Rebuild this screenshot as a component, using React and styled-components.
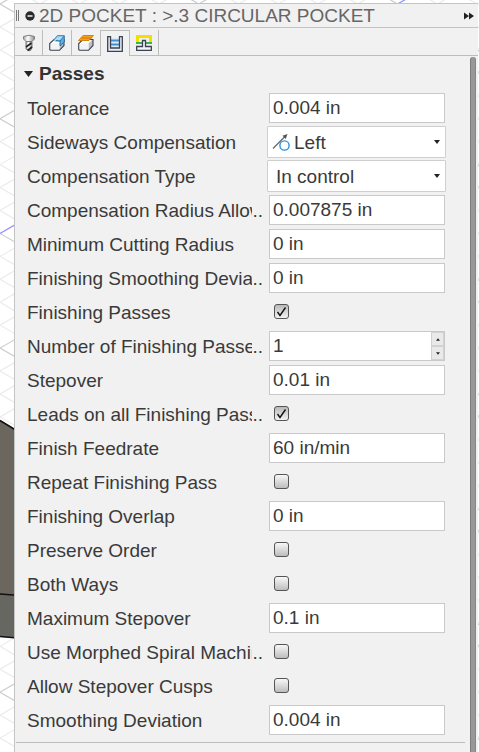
import { useState } from "react";
import styled, { createGlobalStyle } from "styled-components";

const GlobalStyle = createGlobalStyle`
  * {
    box-sizing: border-box;
  }
  body {
    margin: 0;
    background-color: #fff;
    color: #3a3a3a;
    font-family: "Liberation Sans", Arial, sans-serif;
    font-size: 19px;
  }
`;

const Canvas = styled.svg`
  position: fixed;
  inset: 0;
  width: 100%;
  height: 100%;
`;

const Panel = styled.section`
  position: relative;
  display: flex;
  flex-direction: column;
  min-height: calc(100vh - 3px);
  margin: 3px 1px 0 14px;
  border: solid #c4c4c4;
  border-width: 1px 0 0 1px;
  background-color: #f1f1f1;
`;

const TitleBar = styled.header`
  display: flex;
  align-items: center;
  height: 24px;
  padding: 0 4px 0 1px;
  border-bottom: 1px solid #c4c4c4;
`;
const Grip = styled.span`
  width: 3px;
  height: 11px;
  border: solid #777;
  border-width: 0 1px;
`;
const IconButton = styled.button`
  display: flex;
  padding: 0;
  border: none;
  background: none;
  cursor: pointer;
`;
const CollapseButton = styled(IconButton)`
  margin: 0 4px 0 6px;
`;
const Title = styled.h1`
  flex: 1;
  margin: 0;
  color: #666;
  font-size: 19px;
  font-weight: 400;
  line-height: 22px;
  white-space: nowrap;
`;

const Tabs = styled.div`
  display: flex;
  height: 28px;
  padding-top: 2px;
  border-bottom: 1px solid #bdbdbd;
`;
const Tab = styled.button`
  display: flex;
  align-items: center;
  justify-content: center;
  width: 29px;
  height: ${(props) => (props.$active ? "26px" : "25px")};
  padding: 0;
  border: solid #bdbdbd;
  border-width: ${(props) => (props.$active ? "1px 1px 0 0" : "0 1px 0 0")};
  background-color: #f1f1f1;
  cursor: pointer;

  &:first-child {
    width: 28px;
  }
`;

const Body = styled.div`
  display: flex;
  flex: 1;
  padding: 1px 2px 0 0;
`;
const Content = styled.div`
  flex: 1;
  min-width: 0;
`;
const ScrollBar = styled.div`
  width: 6px;
  border-left: 1px solid #7c7c7c;
  border-right: 1px solid #868686;
  border-radius: 3px 3px 0 0;
  background-color: #989898;
`;

const GroupTitle = styled.h2`
  margin: 0;
  font-size: 19px;
`;
const GroupButton = styled.button`
  display: flex;
  align-items: center;
  gap: 6px;
  height: 34px;
  padding: 0 0 0 9px;
  border: none;
  background: none;
  color: #333;
  font: inherit;
  cursor: pointer;
`;

const Row = styled.div`
  display: grid;
  grid-template-columns: 236px minmax(0, 1fr);
  column-gap: 4px;
  align-items: center;
  height: 34px;
  padding: 0 24px 0 12px;
`;
const Label = styled.label`
  display: flex;
  padding-top: 2px;
  line-height: 32px;
  white-space: nowrap;
`;
const LabelText = styled.span`
  overflow: hidden;
`;
const TextBox = styled.div`
  display: flex;
  height: 30px;
  margin: 0 1px 0 2px;
  border: 1px solid #c9c9c9;
  background-color: #fff;
`;
const Input = styled.input`
  flex: 1;
  min-width: 0;
  height: 28px;
  padding: 0 3px;
  border: none;
  outline: none;
  background: none;
  color: inherit;
  font: inherit;
`;
const SelectBox = styled.div`
  display: flex;
  align-items: center;
  height: 32px;
  padding: 0 5px 0 4px;
  border: 1px solid #cfcfcf;
  border-radius: 1px;
  background-color: #fff;
`;
const Select = styled.select`
  flex: 1;
  min-width: 0;
  height: 30px;
  padding: 0 4px;
  border: none;
  outline: none;
  appearance: none;
  background: none;
  color: inherit;
  font: inherit;
`;
const Steps = styled.div`
  display: flex;
  flex-direction: column;
  width: 13px;
`;
const StepButton = styled.button`
  display: flex;
  flex: 1;
  align-items: center;
  justify-content: center;
  padding: 0;
  border: 1px solid #d2d2d2;
  background-color: #e9e9e9;
`;
const CheckBox = styled.span`
  display: grid;
  width: 15px;
  height: 15px;
  margin: 0 0 1px 7px;

  > * {
    grid-area: 1 / 1;
  }
  svg {
    z-index: 1;
    pointer-events: none;
  }
`;
const CheckInput = styled.input`
  width: 15px;
  height: 15px;
  margin: 0;
  border: 1px solid #555;
  border-radius: 3px;
  appearance: none;
  background: linear-gradient(#f8f8f8, #bdbdbd);

  &:checked {
    background: linear-gradient(#b8b8b8, #f4f4f4);
  }
`;
const Hr = styled.hr`
  height: 1px;
  margin: 5px 5px 0 1px;
  border: none;
  background-color: #bdbdbd;
`;

const fields = [
  { id: "tolerance", label: "Tolerance", value: "0.004 in" },
  {
    id: "sideways",
    label: "Sideways Compensation",
    type: "select",
    icon: true,
    options: ["Left", "Right"],
  },
  {
    id: "compType",
    label: "Compensation Type",
    type: "select",
    options: ["In control", "In computer", "Wear", "Inverse wear", "Off"],
  },
  {
    id: "radiusAllowance",
    label: "Compensation Radius Allowance",
    cut: true,
    value: "0.007875 in",
  },
  { id: "minRadius", label: "Minimum Cutting Radius", value: "0 in" },
  {
    id: "finishSmoothing",
    label: "Finishing Smoothing Deviation",
    cut: true,
    value: "0 in",
  },
  {
    id: "finishing",
    label: "Finishing Passes",
    type: "check",
    checked: true,
  },
  {
    id: "passCount",
    label: "Number of Finishing Passes",
    cut: true,
    type: "number",
    value: 1,
  },
  { id: "stepover", label: "Stepover", value: "0.01 in" },
  {
    id: "leads",
    label: "Leads on all Finishing Passes",
    cut: true,
    type: "check",
    checked: true,
  },
  { id: "feedrate", label: "Finish Feedrate", value: "60 in/min" },
  { id: "repeat", label: "Repeat Finishing Pass", type: "check" },
  { id: "overlap", label: "Finishing Overlap", value: "0 in" },
  { id: "order", label: "Preserve Order", type: "check" },
  { id: "bothWays", label: "Both Ways", type: "check" },
  { id: "maxStepover", label: "Maximum Stepover", value: "0.1 in" },
  {
    id: "spiral",
    label: "Use Morphed Spiral Machining",
    cut: true,
    type: "check",
  },
  { id: "cusps", label: "Allow Stepover Cusps", type: "check" },
  { id: "smoothing", label: "Smoothing Deviation", value: "0.004 in" },
];

const ToolIcon = () => (
  <svg width="16" height="18" viewBox="0 0 16 18">
    <defs>
      <linearGradient id="steel">
        <stop offset="0" stopColor="#a5a5a5" />
        <stop offset="0.4" stopColor="#fff" />
        <stop offset="1" stopColor="#8a8a8a" />
      </linearGradient>
    </defs>
    <path
      d="M2.500 2.500 Q8 0 13.500 2.500 V5 L11 7.500 H5 L2.500 5Z"
      fill="url(#steel)"
      stroke="#808080"
    />
    <path d="M5 7.500H11V14L9 17 5 15Z" fill="url(#steel)" stroke="#777" />
    <path d="M5 13 10.500 9M6.500 16.500 11 13" stroke="#222" strokeWidth="1.600" />
  </svg>
);

const Block = () => (
  <>
    <path d="M1 8.500 5.500 4H15L10.500 8.500Z" fill="#fff" />
    <path d="M10.500 8.500 15 4V10.500L10.500 15Z" fill="#b9bdc6" />
    <path d="M1 8.500H10.500V15H1Z" fill="#f2f3f5" />
    <path
      d="M1.500 15.300 .7 14.500V8.500L5 4.500H15V10.500L10.500 15.300H1.500"
      fill="none"
      stroke="#3b4252"
      strokeWidth="1.100"
    />
  </>
);

const GeometryIcon = () => (
  <svg width="16" height="16" viewBox="0 0 16 16">
    <Block />
    <path d="M5.500 4 8.500 .700H15.300V7L11 11V6.500H5.500Z" fill="#5aaee8" />
    <path d="M5.500 4.500 8.500 .700H15.300L11.500 5.500H5.500Z" fill="#a5dcfa" />
    <path
      d="M5.500 4 8.500 .700H15.300V7L11 11V6L7 5.500M11 6 15 1.200"
      fill="none"
      stroke="#1c6193"
      strokeWidth=".8"
    />
  </svg>
);

const HeightsIcon = () => (
  <svg width="16" height="16" viewBox="0 0 16 16">
    <Block />
    <path d="M.500 5.500 5 .500H15.500L11 5.500Z" fill="#f6a01c" stroke="#d4830f" />
    <path d="M3.500 3H13.500" stroke="#c8780d" />
  </svg>
);

const PassesIcon = () => (
  <svg width="16" height="16" viewBox="0 0 16 16">
    <path d="M3 2H13V12H3Z" fill="#d9ecfa" />
    <path d="M3 4.500H13M3 8.500H13" stroke="#4a8ccb" strokeWidth="2" />
    <path
      d="M.700 .700H3.500V12H12.500V.700H15.300V15.300H.700Z"
      fill="#eceef1"
      stroke="#3b4252"
      strokeWidth="1.300"
    />
  </svg>
);

const LinkingIcon = () => (
  <svg width="16" height="16" viewBox="0 0 16 16">
    <path d="M1.500 7V1.500H14.500V7" fill="none" stroke="#f2df00" strokeWidth="3" />
    <path d="M0 8H6M10 8H16" stroke="#38b54a" strokeWidth="2" />
    <path
      d="M6.500 5.500H9.500V11.500H15.300V15.300H.700V11.500H6.500Z"
      fill="#f4f5f7"
      stroke="#3b4252"
      strokeWidth="1.300"
    />
  </svg>
);

const tabs = [
  { name: "Tool", Icon: ToolIcon },
  { name: "Geometry", Icon: GeometryIcon },
  { name: "Heights", Icon: HeightsIcon },
  { name: "Passes", Icon: PassesIcon },
  { name: "Linking", Icon: LinkingIcon },
];

const Arrow = ({ size = 6, up }) => (
  <svg width={size} height={size / 2 + 1} viewBox="0 0 6 4">
    <path d={up ? "M0 4 3 0 6 4Z" : "M0 0H6L3 4Z"} fill="#222" />
  </svg>
);

const LeftIcon = () => (
  <svg width="18" height="18" viewBox="0 0 18 18">
    <path d="M1 15.500 13 3.500" stroke="#666" strokeWidth="1.300" />
    <path d="M15.500 1 10.500 2.800 13.700 6Z" fill="#555" />
    <circle cx="12.500" cy="12.500" r="4.600" fill="#fff" stroke="#2b8fe0" strokeWidth="1.400" />
  </svg>
);

// isometric work plane, every fifth line is a major one
const slope = 0.577;
const pitch = 22.94;
const gridLines = Array.from({ length: 150 }, (_, i) => i - 50);

const Backdrop = () => (
  <Canvas aria-hidden="true">
    {gridLines.map((i) => {
      const y = 4 + i * pitch;
      const major = i % 5 === 0;
      const color = major ? "#cdcdcd" : "#ebebeb";
      return (
        <g key={i} strokeWidth="1.200">
          <line x1="0" y1={y} x2="2000" y2={y + 2000 * slope} stroke={color} />
          <line
            x1="0"
            y1={y}
            x2="2000"
            y2={y - 2000 * slope}
            stroke={i === 10 ? "#8f8fff" : color}
          />
        </g>
      );
    })}
    <path d="M0 420 14 429 40 445V638L0 637Z" fill="#6c675e" />
    <path d="M0 594 40 597V640L0 636Z" fill="#666761" />
    <path
      d="M0 420.500 14 429 40 445M0 594 40 597M0 636.500 40 640"
      fill="none"
      stroke="#111"
      strokeWidth="1.500"
    />
  </Canvas>
);

const Field = ({ field }) => {
  const [value, setValue] = useState(
    field.type === "select" ? field.options[0] : field.value
  );
  const [checked, setChecked] = useState(Boolean(field.checked));

  if (field.type === "check") {
    return (
      <CheckBox>
        <CheckInput
          id={field.id}
          type="checkbox"
          checked={checked}
          onChange={(e) => setChecked(e.target.checked)}
        />
        {checked && (
          <svg width="15" height="15" viewBox="0 0 15 15">
            <path
              d="M3.500 8 6 11.500 11.500 3.500"
              fill="none"
              stroke="#111"
              strokeWidth="1.400"
            />
          </svg>
        )}
      </CheckBox>
    );
  }

  if (field.type === "select") {
    return (
      <SelectBox>
        {field.icon && <LeftIcon />}
        <Select
          id={field.id}
          value={value}
          onChange={(e) => setValue(e.target.value)}
        >
          {field.options.map((option) => (
            <option key={option}>{option}</option>
          ))}
        </Select>
        <Arrow />
      </SelectBox>
    );
  }

  return (
    <TextBox>
      <Input
        id={field.id}
        value={value}
        onChange={(e) => setValue(e.target.value)}
      />
      {field.type === "number" && (
        <Steps>
          <StepButton
            aria-label="Increase"
            onClick={() => setValue(Number(value) + 1)}
          >
            <Arrow size={4} up />
          </StepButton>
          <StepButton
            aria-label="Decrease"
            onClick={() => setValue(Math.max(1, Number(value) - 1))}
          >
            <Arrow size={4} />
          </StepButton>
        </Steps>
      )}
    </TextBox>
  );
};

const App = () => {
  const [active, setActive] = useState("Passes");
  const [open, setOpen] = useState(true);

  return (
    <>
      <GlobalStyle />
      <Backdrop />
      <Panel>
        <TitleBar>
          <Grip />
          <CollapseButton aria-label="Collapse">
            <svg width="10" height="10" viewBox="0 0 10 10">
              <circle cx="5" cy="5" r="4.700" fill="#2b2b2b" />
              <path d="M2.500 5H7.500" stroke="#fff" strokeWidth="1.400" />
            </svg>
          </CollapseButton>
          <Title>2D POCKET : &gt;.3 CIRCULAR POCKET</Title>
          <IconButton aria-label="Dock">
            <svg width="10" height="8" viewBox="0 0 10 8">
              <path d="M0 .500 5 4 0 7.500ZM5 .500 10 4 5 7.500Z" fill="#222" />
            </svg>
          </IconButton>
        </TitleBar>
        <Tabs role="tablist">
          {tabs.map(({ name, Icon }) => (
            <Tab
              key={name}
              role="tab"
              aria-label={name}
              aria-selected={active === name}
              $active={active === name}
              onClick={() => setActive(name)}
            >
              <Icon />
            </Tab>
          ))}
        </Tabs>
        <Body>
          <Content>
            <GroupTitle>
              <GroupButton aria-expanded={open} onClick={() => setOpen(!open)}>
                <svg width="9" height="6" viewBox="0 0 9 6">
                  <path d="M0 0H9L4.500 6Z" fill="#222" />
                </svg>
                Passes
              </GroupButton>
            </GroupTitle>
            {open &&
              fields.map((field) => (
                <Row key={field.id}>
                  <Label htmlFor={field.id}>
                    <LabelText>{field.label}</LabelText>
                    {field.cut && <span>..</span>}
                  </Label>
                  <Field field={field} />
                </Row>
              ))}
            <Hr />
          </Content>
          <ScrollBar />
        </Body>
      </Panel>
    </>
  );
};

export default App;
